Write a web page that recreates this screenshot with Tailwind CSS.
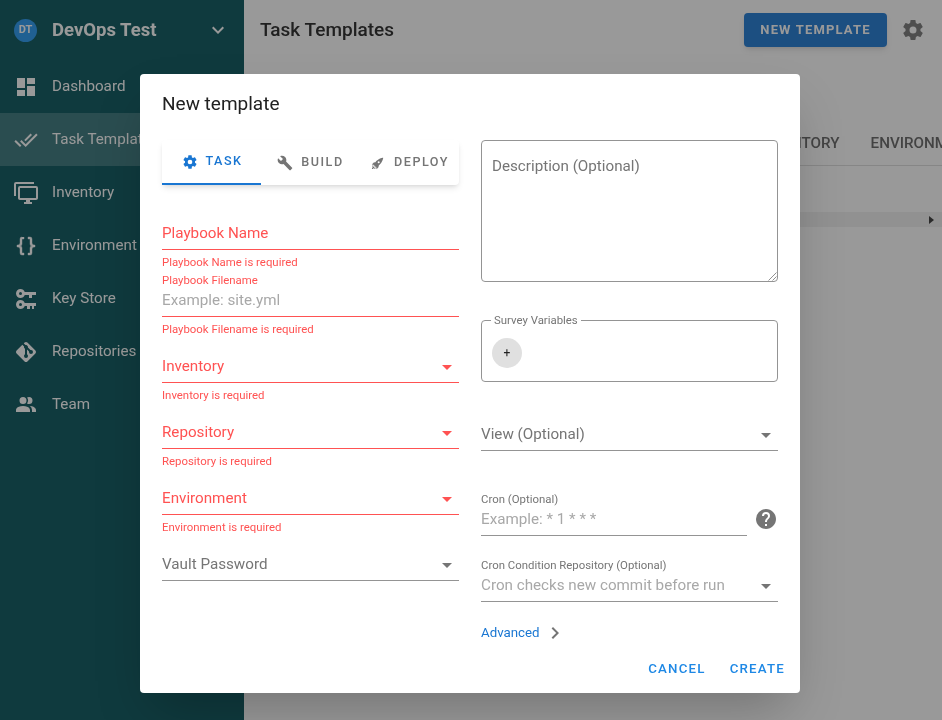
<!DOCTYPE html>
<html>
<head>
<meta charset="utf-8">
<script src="https://cdn.jsdelivr.net/npm/@tailwindcss/browser@4"></script>
</head>
<body class="m-0 overflow-hidden">
<div class="relative flex h-[720px] w-[942px] overflow-hidden bg-white font-['Roboto',sans-serif] blur-[0.35px]">
  <!-- Sidebar -->
  <aside class="w-[244px] shrink-0 bg-[#005057] text-white">
    <div class="flex h-[60px] items-center pl-[14px] pr-[14px]">
      <div class="flex h-[23px] w-[23px] items-center justify-center rounded-full bg-[#2196f3] text-[11px] font-bold">DT</div>
      <div class="ml-[15px] pt-[1px] text-[18.5px] font-bold">DevOps Test</div>
      <svg class="ml-auto h-6 w-6" viewBox="0 0 24 24" fill="currentColor"><path d="M7.41,8.58L12,13.17L16.59,8.58L18,10L12,16L6,10L7.41,8.58Z"/></svg>
    </div>
    <nav class="text-[15.2px]">
      <div class="flex h-[53px] items-center gap-[14px] pl-[14px]"><svg class="h-6 w-6 shrink-0" viewBox="0 0 24 24" fill="currentColor"><path d="M13,3V9H21V3M13,21H21V11H13M3,21H11V15H3M3,13H11V3H3V13Z"/></svg><span>Dashboard</span></div>
      <div class="flex h-[53px] items-center gap-[14px] bg-white/20 pl-[14px]"><svg class="h-6 w-6 shrink-0" viewBox="0 0 24 24" fill="currentColor"><path d="M0.41,13.41L6,19L7.41,17.58L1.83,12M22.24,5.58L11.66,16.17L7.5,12L6.07,13.41L11.66,19L23.66,7M18,7L16.59,5.58L10.24,11.93L11.66,13.34L18,7Z"/></svg><span>Task Templates</span></div>
      <div class="flex h-[53px] items-center gap-[14px] pl-[14px]"><svg class="h-6 w-6 shrink-0" viewBox="0 0 24 24" fill="currentColor"><path d="M22,17V7H6V17H22M22,5A2,2 0 0,1 24,7V17C24,18.11 23.1,19 22,19H16V21H18V23H10V21H12V19H6C4.89,19 4,18.11 4,17V7A2,2 0 0,1 6,5H22M2,3V15H0V3A2,2 0 0,1 2,1H20V3H2Z"/></svg><span>Inventory</span></div>
      <div class="flex h-[53px] items-center gap-[14px] pl-[14px]"><svg class="h-6 w-6 shrink-0" viewBox="0 0 24 24" fill="currentColor" stroke="currentColor" stroke-width="0.4"><path d="M8,3A2,2 0 0,0 6,5V9A2,2 0 0,1 4,11H3V13H4A2,2 0 0,1 6,15V19A2,2 0 0,0 8,21H10V19H8V14A2,2 0 0,0 6,12A2,2 0 0,0 8,10V5H10V3M16,3A2,2 0 0,1 18,5V9A2,2 0 0,0 20,11H21V13H20A2,2 0 0,0 18,15V19A2,2 0 0,1 16,21H14V19H16V14A2,2 0 0,1 18,12A2,2 0 0,1 16,10V5H14V3H16Z"/></svg><span>Environment</span></div>
      <div class="flex h-[53px] items-center gap-[14px] pl-[14px]"><svg class="h-6 w-6 shrink-0" viewBox="0 0 24 24" fill="currentColor"><path d="M6.5,2C8.46,2 10.13,3.25 10.74,5H22V8H18V11H15V8H10.74C10.13,9.75 8.46,11 6.5,11C4,11 2,9 2,6.5C2,4 4,2 6.5,2M6.5,5A1.5,1.5 0 0,0 5,6.5A1.5,1.5 0 0,0 6.5,8A1.5,1.5 0 0,0 8,6.5A1.5,1.5 0 0,0 6.5,5M6.5,13C8.46,13 10.13,14.25 10.74,16H22V19H20V22H18V19H16V22H13V19H10.74C10.13,20.75 8.46,22 6.5,22C4,22 2,20 2,17.5C2,15 4,13 6.5,13M6.5,16A1.5,1.5 0 0,0 5,17.5A1.5,1.5 0 0,0 6.5,19A1.5,1.5 0 0,0 8,17.5A1.5,1.5 0 0,0 6.5,16Z"/></svg><span>Key Store</span></div>
      <div class="flex h-[53px] items-center gap-[14px] pl-[14px]"><svg class="h-6 w-6 shrink-0" viewBox="0 0 24 24" fill="currentColor"><path d="M2.6,10.59L8.38,4.8L10.07,6.5C9.83,7.35 10.22,8.28 11,8.73V14.27C10.4,14.61 10,15.26 10,16A2,2 0 0,0 12,18A2,2 0 0,0 14,16C14,15.26 13.6,14.61 13,14.27V9.41L15.07,11.5C15,11.65 15,11.82 15,12A2,2 0 0,0 17,14A2,2 0 0,0 19,12A2,2 0 0,0 17,10C16.82,10 16.65,10 16.5,10.07L13.93,7.5C14.19,6.57 13.71,5.55 12.78,5.16C12.35,5 11.9,4.96 11.5,5.07L9.8,3.38L10.59,2.6C11.37,1.81 12.63,1.81 13.41,2.6L21.4,10.59C22.19,11.37 22.19,12.63 21.4,13.41L13.41,21.4C12.63,22.19 11.37,22.19 10.59,21.4L2.6,13.41C1.81,12.63 1.81,11.37 2.6,10.59Z"/></svg><span>Repositories</span></div>
      <div class="flex h-[53px] items-center gap-[14px] pl-[14px]"><svg class="h-6 w-6 shrink-0" viewBox="0 0 24 24" fill="currentColor"><path d="M16 17V19H2V17S2 13 9 13 16 17 16 17M12.5 7.5A3.5 3.5 0 1 0 9 11A3.5 3.5 0 0 0 12.5 7.5M15.94 13A5.32 5.32 0 0 1 18 17V19H22V17S22 13.37 15.94 13M15 4A3.39 3.39 0 0 0 13.07 4.59A5 5 0 0 1 13.07 10.41A3.39 3.39 0 0 0 15 11A3.5 3.5 0 0 0 15 4Z"/></svg><span>Team</span></div>
    </nav>
  </aside>
  <!-- Main page -->
  <main class="min-w-0 flex-1 overflow-hidden">
    <div class="flex h-[60px] items-center pl-4 pr-[17px]">
      <div class="text-[19px] font-medium text-[#212121]">Task Templates</div>
      <div class="ml-auto flex h-[34px] w-[143px] items-center justify-center rounded bg-[#1976d2] text-[13px] font-bold tracking-[0.09em] text-white shadow-md">NEW TEMPLATE</div>
      <svg class="ml-[14px] h-6 w-6 text-[#757575]" viewBox="0 0 24 24" fill="currentColor"><path d="M12,15.5A3.5,3.5 0 0,1 8.5,12A3.5,3.5 0 0,1 12,8.5A3.5,3.5 0 0,1 15.5,12A3.5,3.5 0 0,1 12,15.5M19.43,12.97C19.47,12.65 19.5,12.33 19.5,12C19.5,11.67 19.47,11.34 19.43,11L21.54,9.37C21.73,9.22 21.78,8.95 21.66,8.73L19.66,5.27C19.54,5.05 19.27,4.96 19.05,5.05L16.56,6.05C16.04,5.66 15.5,5.32 14.87,5.07L14.5,2.42C14.46,2.18 14.25,2 14,2H10C9.75,2 9.54,2.18 9.5,2.42L9.13,5.07C8.5,5.32 7.96,5.66 7.44,6.05L4.95,5.05C4.73,4.96 4.46,5.05 4.34,5.27L2.34,8.73C2.21,8.95 2.27,9.22 2.46,9.37L4.57,11C4.53,11.34 4.5,11.67 4.5,12C4.5,12.33 4.53,12.65 4.57,12.97L2.46,14.63C2.27,14.78 2.21,15.05 2.34,15.27L4.34,18.73C4.46,18.95 4.73,19.03 4.95,18.95L7.44,17.94C7.96,18.34 8.5,18.68 9.13,18.93L9.5,21.58C9.54,21.82 9.75,22 10,22H14C14.25,22 14.46,21.82 14.5,21.58L14.87,18.93C15.5,18.67 16.04,18.34 16.56,17.94L19.05,18.95C19.27,19.03 19.54,18.95 19.66,18.73L21.66,15.27C21.78,15.05 21.73,14.78 21.54,14.63L19.43,12.97Z"/></svg>
    </div>
    <div class="mt-[61px] flex h-[45px] items-center gap-[31px] whitespace-nowrap border-b border-[#dcdcdc] pl-[506px] text-[15.2px] font-medium text-[#616161]">
      <span>REPOSITORY</span><span>ENVIRONMENT</span>
    </div>
    <div class="mt-[46px] flex h-[15px] items-center justify-end bg-[#f1f1f1] pr-2">
      <div class="h-0 w-0 border-y-[4px] border-l-[5px] border-y-transparent border-l-[#333]"></div>
    </div>
  </main>
  <!-- Scrim -->
  <div class="absolute inset-0 bg-[#212121]/46"></div>
  <!-- Dialog -->
  <div class="absolute left-[140px] top-[74px] h-[619px] w-[660px] rounded bg-white px-[22px] shadow-2xl">
    <h2 class="flex h-[66px] items-center pb-[5px] text-[19px] font-normal text-[#212121]">New template</h2>
    <div class="flex gap-[22px]">
      <!-- Left column -->
      <div class="w-[297px]">
        <div class="flex h-[45px] rounded bg-white text-[12.6px] font-medium tracking-[0.12em] text-[#757575] shadow-md">
          <div class="flex w-[99px] items-center justify-center gap-[7px] border-b-2 border-[#1976d2] pl-[2px] text-[#1976d2]"><svg class="h-4 w-4" viewBox="0 0 24 24" fill="currentColor"><path d="M12,15.5A3.5,3.5 0 0,1 8.5,12A3.5,3.5 0 0,1 12,8.5A3.5,3.5 0 0,1 15.5,12A3.5,3.5 0 0,1 12,15.5M19.43,12.97C19.47,12.65 19.5,12.33 19.5,12C19.5,11.67 19.47,11.34 19.43,11L21.54,9.37C21.73,9.22 21.78,8.95 21.66,8.73L19.66,5.27C19.54,5.05 19.27,4.96 19.05,5.05L16.56,6.05C16.04,5.66 15.5,5.32 14.87,5.07L14.5,2.42C14.46,2.18 14.25,2 14,2H10C9.75,2 9.54,2.18 9.5,2.42L9.13,5.07C8.5,5.32 7.96,5.66 7.44,6.05L4.95,5.05C4.73,4.96 4.46,5.05 4.34,5.27L2.34,8.73C2.21,8.95 2.27,9.22 2.46,9.37L4.57,11C4.53,11.34 4.5,11.67 4.5,12C4.5,12.33 4.53,12.65 4.57,12.97L2.46,14.63C2.27,14.78 2.21,15.05 2.34,15.27L4.34,18.73C4.46,18.95 4.73,19.03 4.95,18.95L7.44,17.94C7.96,18.34 8.5,18.68 9.13,18.93L9.5,21.58C9.54,21.82 9.75,22 10,22H14C14.25,22 14.46,21.82 14.5,21.58L14.87,18.93C15.5,18.67 16.04,18.34 16.56,17.94L19.05,18.95C19.27,19.03 19.54,18.95 19.66,18.73L21.66,15.27C21.78,15.05 21.73,14.78 21.54,14.63L19.43,12.97Z"/></svg><span>TASK</span></div>
          <div class="flex w-[99px] items-center justify-center gap-2"><svg class="h-4 w-4" viewBox="0 0 24 24" fill="currentColor"><path d="M22.7,19L13.6,9.9C14.5,7.6 14,4.9 12.1,3C10.1,1 7.1,0.6 4.7,1.7L9,6L6,9L1.6,4.7C0.4,7.1 0.9,10.1 2.9,12.1C4.8,14 7.5,14.5 9.8,13.6L18.9,22.7C19.3,23.1 19.9,23.1 20.3,22.7L22.6,20.4C23.1,20 23.1,19.3 22.7,19Z"/></svg><span>BUILD</span></div>
          <div class="flex w-[99px] items-center justify-center gap-2"><svg class="h-4 w-4" viewBox="0 0 24 24" fill="currentColor"><path d="M2.81,14.12L5.64,11.29L8.17,10.79C11.39,6.41 17.55,4.22 19.78,4.22C19.78,6.45 17.59,12.61 13.21,15.83L12.71,18.36L9.88,21.19L9.17,17.66C7.76,17.66 7.76,17.66 7.05,16.95C6.34,16.24 6.34,16.24 6.34,14.83L2.81,14.12M5.64,16.95L7.05,18.36L4.39,21.03H2.97V19.61L5.64,16.95M4.22,15.54L5.46,15.71L3,18.16V16.74L4.22,15.54M8.29,18.54L8.46,19.78L7.26,21H5.84L8.29,18.54M13,9.5A1.5,1.5 0 0,0 11.5,11A1.5,1.5 0 0,0 13,12.5A1.5,1.5 0 0,0 14.5,11A1.5,1.5 0 0,0 13,9.5Z"/></svg><span>DEPLOY</span></div>
        </div>
        <div class="mt-[32px] h-[67px]">
          <div class="flex h-[33px] items-center border-b border-[#ff5252] pt-[1px] text-[15.2px] text-[#ff5252]">Playbook Name</div>
          <div class="mt-[5px] text-[11.4px] leading-[14px] text-[#ff5252]">Playbook Name is required</div>
        </div>
        <div class="relative h-[66px]">
          <div class="absolute -top-[11px] left-0 text-[11.4px] leading-[14px] text-[#ff5252]">Playbook Filename</div>
          <div class="flex h-[33px] items-center border-b border-[#ff5252] pt-[1px] text-[15.2px] text-[#a8a8a8]">Example: site.yml</div>
          <div class="mt-[5px] text-[11.4px] leading-[14px] text-[#ff5252]">Playbook Filename is required</div>
        </div>
        <div class="h-[66px]">
          <div class="flex h-[33px] items-center justify-between border-b border-[#ff5252] pt-[1px] text-[15.2px] text-[#ff5252]"><span>Inventory</span><svg class="h-6 w-6" viewBox="0 0 24 24" fill="currentColor"><path d="M7,10L12,15L17,10H7Z"/></svg></div>
          <div class="mt-[5px] text-[11.4px] leading-[14px] text-[#ff5252]">Inventory is required</div>
        </div>
        <div class="h-[66px]">
          <div class="flex h-[33px] items-center justify-between border-b border-[#ff5252] pt-[1px] text-[15.2px] text-[#ff5252]"><span>Repository</span><svg class="h-6 w-6" viewBox="0 0 24 24" fill="currentColor"><path d="M7,10L12,15L17,10H7Z"/></svg></div>
          <div class="mt-[5px] text-[11.4px] leading-[14px] text-[#ff5252]">Repository is required</div>
        </div>
        <div class="h-[66px]">
          <div class="flex h-[33px] items-center justify-between border-b border-[#ff5252] pt-[1px] text-[15.2px] text-[#ff5252]"><span>Environment</span><svg class="h-6 w-6" viewBox="0 0 24 24" fill="currentColor"><path d="M7,10L12,15L17,10H7Z"/></svg></div>
          <div class="mt-[5px] text-[11.4px] leading-[14px] text-[#ff5252]">Environment is required</div>
        </div>
        <div class="flex h-[33px] items-center justify-between border-b border-[#949494] pt-[1px] text-[15.2px] text-[#757575]"><span>Vault Password</span><svg class="h-6 w-6" viewBox="0 0 24 24" fill="currentColor"><path d="M7,10L12,15L17,10H7Z"/></svg></div>
      </div>
      <!-- Right column -->
      <div class="w-[297px]">
        <div class="relative h-[142px] rounded border border-[#949494] px-[10px] pt-[14px] text-[15.2px] text-[#757575]">
          Description (Optional)
          <svg class="absolute bottom-0 right-0 h-[10px] w-[10px] text-[#757575]" viewBox="0 0 10 10" fill="none" stroke="currentColor" stroke-width="0.8"><path d="M9.5 1.5L1.5 9.5M9.5 5.5L5.5 9.5"/></svg>
        </div>
        <fieldset class="mt-[32px] h-[68px] rounded border border-[#949494] pl-[10px]">
          <legend class="ml-[-1px] px-[3px] text-[11.4px] leading-[13px] text-[#757575]">Survey Variables</legend>
          <div class="mt-[11px] flex h-[30px] w-[30px] items-center justify-center rounded-full bg-[#e0e0e0] text-xs text-[#212121]">+</div>
        </fieldset>
        <div class="mt-[36px] flex h-[33px] items-center justify-between border-b border-[#949494] pt-[1px] text-[15.2px] text-[#757575]"><span>View (Optional)</span><svg class="h-6 w-6" viewBox="0 0 24 24" fill="currentColor"><path d="M7,10L12,15L17,10H7Z"/></svg></div>
        <div class="mt-[52px] flex items-center gap-[7px]">
          <div class="relative w-[266px]">
            <div class="absolute -top-[11px] left-0 text-[11.4px] leading-[14px] text-[#757575]">Cron (Optional)</div>
            <div class="flex h-[33px] items-center border-b border-[#949494] pt-[1px] text-[15.2px] text-[#a8a8a8]">Example: * 1 * * *</div>
          </div>
          <svg class="mb-[1px] h-6 w-6 text-[#757575]" viewBox="0 0 24 24" fill="currentColor"><path d="M15.07,11.25L14.17,12.17C13.45,12.89 13,13.5 13,15H11V14.5C11,13.39 11.45,12.39 12.17,11.67L13.41,10.41C13.78,10.05 14,9.55 14,9C14,7.89 13.1,7 12,7A2,2 0 0,0 10,9H8A4,4 0 0,1 12,5A4,4 0 0,1 16,9C16,9.88 15.64,10.67 15.07,11.25M13,19H11V17H13M12,2A10,10 0 0,0 2,12C2,17.52 6.48,22 12,22C17.52,22 22,17.52 22,12C22,6.47 17.5,2 12,2Z"/></svg>
        </div>
        <div class="relative mt-[33px]">
          <div class="absolute -top-[11px] left-0 text-[11.4px] leading-[14px] text-[#757575]">Cron Condition Repository (Optional)</div>
          <div class="flex h-[33px] items-center justify-between border-b border-[#949494] pt-[1px] text-[15.2px] text-[#a8a8a8]"><span>Cron checks new commit before run</span><svg class="h-6 w-6 text-[#757575]" viewBox="0 0 24 24" fill="currentColor"><path d="M7,10L12,15L17,10H7Z"/></svg></div>
        </div>
        <div class="mt-[19px] flex h-[24px] items-center text-[13.3px] text-[#1976d2]"><span>Advanced</span><svg class="ml-[3px] h-6 w-6 text-[#757575]" viewBox="0 0 24 24" fill="currentColor"><path d="M8.59,16.58L13.17,12L8.59,7.41L10,6L16,12L10,18L8.59,16.58Z"/></svg></div>
      </div>
    </div>
    <div class="absolute bottom-[14px] right-[15px] flex h-[20px] items-center gap-[24px] text-[13.3px] font-medium tracking-[0.09em] text-[#1e88e5]">
      <span>CANCEL</span><span>CREATE</span>
    </div>
  </div>
</div>
</body>
</html>
